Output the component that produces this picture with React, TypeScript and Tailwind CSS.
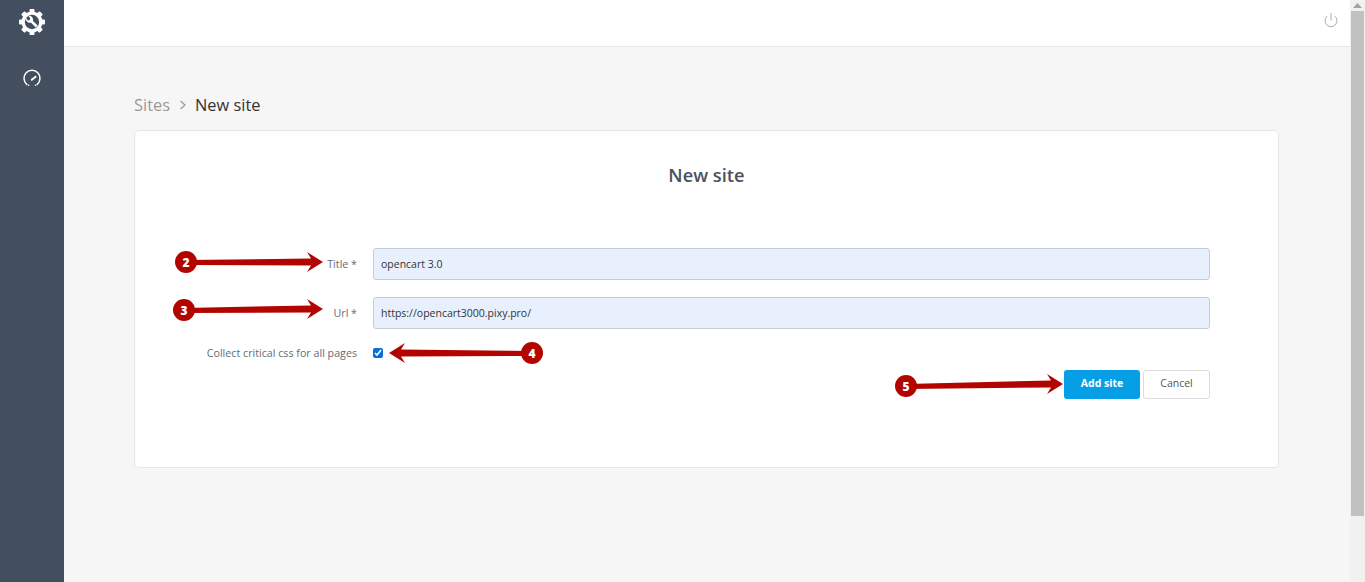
import React from "react";
import { Power } from "lucide-react";

const font = { fontFamily: '"Open Sans", "Noto Sans", sans-serif' };

const GearWrench = () => (
  <svg width="26" height="26" viewBox="0 0 26 26" fill="none">
    <g fill="#fff">
      <circle cx="13" cy="13" r="10.500" />
      <rect x="10.500" y="0" width="5" height="26" rx="1" />
      <rect x="10.500" y="0" width="5" height="26" rx="1" transform="rotate(45 13 13)" />
      <rect x="10.500" y="0" width="5" height="26" rx="1" transform="rotate(90 13 13)" />
      <rect x="10.500" y="0" width="5" height="26" rx="1" transform="rotate(135 13 13)" />
    </g>
    <circle cx="13" cy="13" r="7.200" fill="#434f5f" />
    <path
      fill="#fff"
      d="M6.800 8.500a4.300 4.300 0 0 0 5.300 5.200l4.700 4.800 1.900-1.900-4.800-4.700a4.300 4.300 0 0 0-5.200-5.300l2.500 2.500-.4 2-2 .4z"
    />
  </svg>
);

const Gauge = () => (
  <svg width="18" height="18" viewBox="0 0 18 18" fill="none" stroke="#fff" strokeWidth="1.500" strokeLinecap="round">
    <path d="M3.800 15.400A8 8 0 1 1 14.200 15.400" />
    <path d="M8.800 10.800 12.600 7.800" strokeWidth="2" />
    <path d="M5.600 16.200h.1M12.400 16.200h.1" />
  </svg>
);

// red pointer drawn over the form, with a numbered dot at its tail
const Callout = ({ num, dot, tip }: { num: string; dot: [number, number]; tip: [number, number] }) => {
  const dir = tip[0] > dot[0] ? 1 : -1;
  const neck = tip[0] - dir * 12;
  return (
    <svg className="absolute top-0 left-0 pointer-events-none" width="1365" height="582">
      <polygon
        fill="#b30500"
        points={`${dot[0]},${dot[1] - 2} ${neck},${tip[1] - 3.5} ${neck - dir * 4},${tip[1] - 10} ${tip[0]},${tip[1]} ${neck - dir * 4},${tip[1] + 10} ${neck},${tip[1] + 3.5} ${dot[0]},${dot[1] + 3}`}
      />
      <circle cx={dot[0]} cy={dot[1]} r="11" fill="#b30500" />
      <text x={dot[0]} y={dot[1] + 4.500} textAnchor="middle" fill="#fff" fontSize="12" fontWeight="800" style={font}>
        {num}
      </text>
    </svg>
  );
};

const Field = ({ label, value }: { label: string; value: string }) => (
  <div className="flex items-center">
    <label className="w-[222px] text-right text-[10.700px] text-[#666c74]">{label}</label>
    <input
      readOnly
      value={value}
      className="ml-4 h-8 flex-1 rounded-[3px] border border-[#c5ccd6] bg-[#e8f0fe] px-[7px] text-[10.500px] text-[#333] outline-none"
    />
  </div>
);

export default function App() {
  return (
    <div className="relative flex h-[582px] w-full overflow-hidden bg-[#f6f6f6]" style={font}>
      <aside className="flex w-16 shrink-0 flex-col items-center bg-[#434f5f]">
        <div className="mt-[9px]">
          <GearWrench />
        </div>
        <div className="mt-[34px]">
          <Gauge />
        </div>
      </aside>

      <div className="flex min-w-0 flex-1 flex-col">
        <header className="flex h-[47px] shrink-0 justify-end border-b border-[#e8e8e8] bg-white pt-[12px] pr-[11px]">
          <Power size={16} strokeWidth={1.300} color="#9f9f9f" />
        </header>

        <main className="flex-1 pr-[71px] pl-[70px]">
          <nav className="mt-[46px] flex h-6 items-center text-[16.400px] leading-6">
            <span className="text-[#999]">Sites</span>
            <svg className="mr-[8px] ml-[9px]" width="8" height="10" viewBox="0 0 8 10" fill="none" stroke="#999" strokeWidth="1.200">
              <path d="M1.500 1 6 5 1.500 9" />
            </svg>
            <span className="text-[#333]">New site</span>
          </nav>

          <section className="mt-[13px] h-[338px] rounded-[5px] border border-[#e6e6e6] bg-white pr-[68px]">
            <h1 className="pt-[30px] pl-[68px] text-center text-[18.300px] leading-[27px] font-semibold text-[#4a5260]">
              New site
            </h1>
            <div className="mt-[60px] flex flex-col gap-[17px]">
              <Field label="Title *" value="opencart 3.0" />
              <Field label="Url *" value="https://opencart3000.pixy.pro/" />
            </div>
            <div className="mt-[14px] flex h-[20px] items-center">
              <label className="w-[222px] pt-[1px] text-right text-[10.700px] text-[#666c74]">Collect critical css for all pages</label>
              <input readOnly type="checkbox" checked className="ml-4 h-[10px] w-[10px] accent-[#0b6fd8]" />
            </div>
            <div className="mt-[7px] flex justify-end gap-[3px]">
              <button className="h-[29px] w-[76px] rounded-[3px] bg-[#069fe6] pb-[2px] text-[10.500px] font-bold text-white">
                Add site
              </button>
              <button className="h-[29px] w-[67px] rounded-[3px] border border-[#dcdcdc] bg-white pb-[2px] text-[10.500px] text-[#555]">
                Cancel
              </button>
            </div>
          </section>
        </main>
      </div>

      <div className="flex w-[15px] shrink-0 flex-col items-center bg-[#f1f1f1]">
        <svg className="my-[3px]" width="9" height="5" viewBox="0 0 9 5">
          <path d="M4.500 0 9 5H0z" fill="#a3a3a3" />
        </svg>
        <div className="h-[505px] w-[13px] bg-[#c1c1c1]" />
      </div>

      <Callout num="2" dot={[186, 262]} tip={[323, 262]} />
      <Callout num="3" dot={[184, 310]} tip={[323, 309]} />
      <Callout num="4" dot={[532, 353]} tip={[389, 353]} />
      <Callout num="5" dot={[906, 386]} tip={[1063, 384]} />
    </div>
  );
}
